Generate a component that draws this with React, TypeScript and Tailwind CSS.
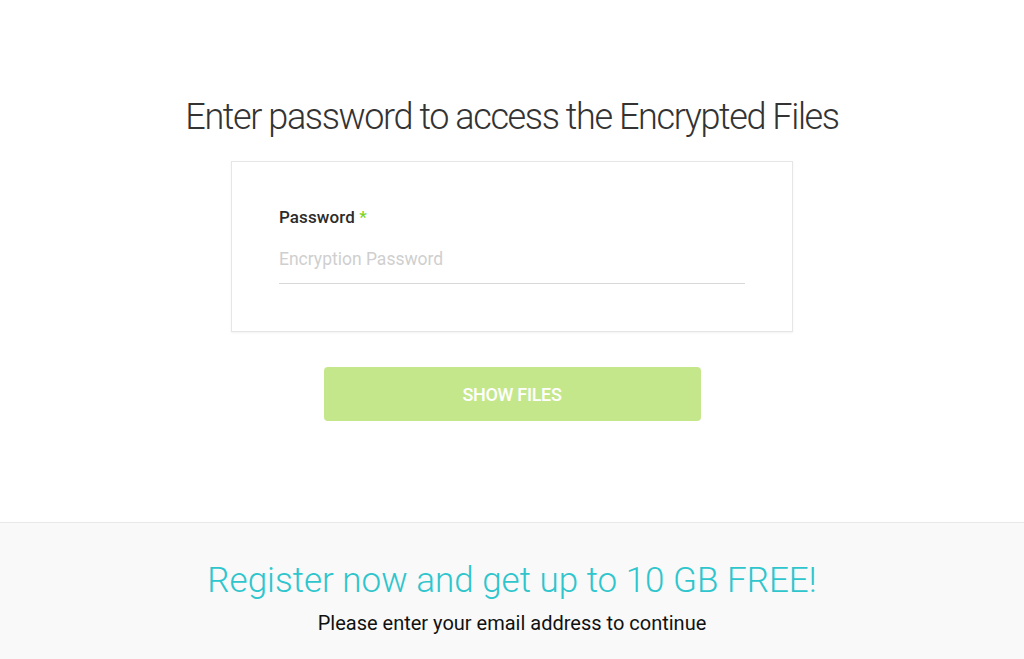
export default function App() {
  return (
    <div className="flex min-h-[659px] flex-col bg-white font-['Roboto',sans-serif]">
      <main className="flex flex-col items-center pt-[95px] pb-[101px]">
        <h1 className="text-[36px] font-light leading-[44px] tracking-[-1.4px] text-[#333]">
          Enter password to access the Encrypted Files
        </h1>
        <div className="mt-[22px] w-[562px] border border-[#e6e6e6] bg-white px-[47px] pt-[44px] pb-[47px] shadow-[0_1px_2px_rgba(0,0,0,0.06)]">
          <label className="block text-[17px] font-medium leading-[22px] tracking-[0.1px] text-[#2b2b2b]">
            Password <span className="text-[#7ed321]">*</span>
          </label>
          <div className="mt-[10px] border-b border-[#d8d8d8] pt-[10px] pb-[11px]">
            <input
              type="password"
              placeholder="Encryption Password"
              className="w-full bg-transparent text-[17.5px] leading-[22px] text-[#333] outline-none placeholder:text-[#cfcfcf]"
            />
          </div>
        </div>
        <button className="mt-[35px] h-[54px] w-[377px] rounded-[4px] bg-[#c5e78c] text-[18px] font-medium uppercase tracking-[-0.3px] text-white">
          Show files
        </button>
      </main>
      <footer className="flex flex-1 flex-col items-center border-t border-[#e8e8e8] bg-[#f9f9f9] pt-[36px]">
        <h2 className="text-[35px] font-light leading-[44px] text-[#2ec5cd]">
          Register now and get up to 10 GB FREE!
        </h2>
        <p className="mt-[7px] text-[20px] leading-[26px] text-[#111]">
          Please enter your email address to continue
        </p>
      </footer>
    </div>
  );
}
